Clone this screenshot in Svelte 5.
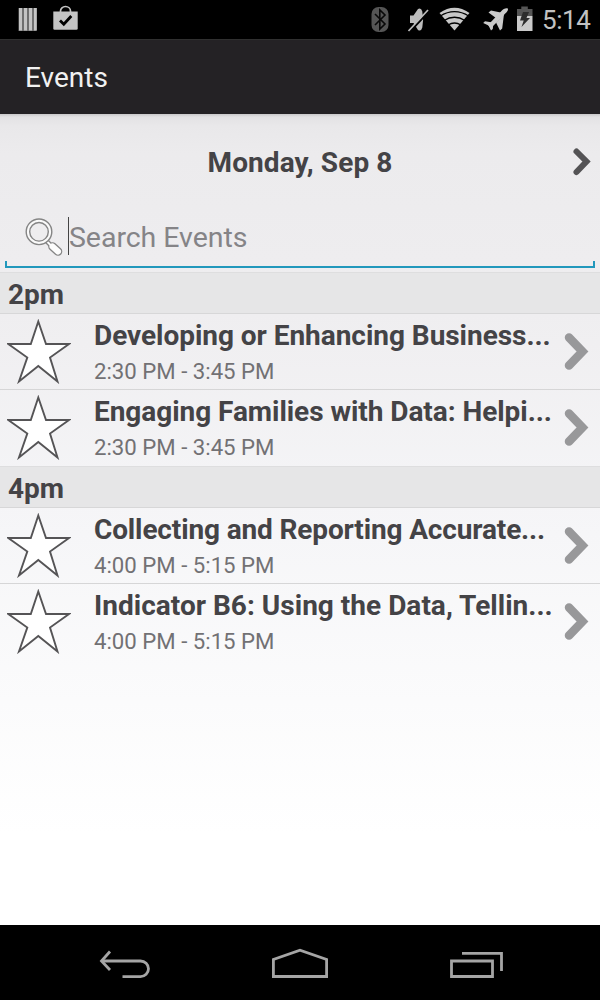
<script>
  const groups = [
    {
      hour: '2pm',
      events: [
        { title: 'Developing or Enhancing Business...', time: '2:30 PM - 3:45 PM', tracking: -0.04 },
        { title: 'Engaging Families with Data: Helpi...', time: '2:30 PM - 3:45 PM', tracking: -0.05 }
      ]
    },
    {
      hour: '4pm',
      events: [
        { title: 'Collecting and Reporting Accurate...', time: '4:00 PM - 5:15 PM', tracking: -0.14 },
        { title: 'Indicator B6: Using the Data, Tellin...', time: '4:00 PM - 5:15 PM', tracking: 0.02 }
      ]
    }
  ];
</script>

<div class="screen">
  <div class="status">
    <svg class="notes" width="80" height="39" viewBox="0 0 80 39">
      <path d="M18.500 8h18v23h-18z" fill="#6f6f6f" />
      <path d="M19 8h3v22.500h-3zM24 8h3v22.500h-3zM29 8h3v22.500h-3zM34 8h2.800v22.500h-2.800z" fill="#c4c4c4" />
      <path d="M60.500 12v-1a5 4.500 0 0 1 10 0v1" fill="none" stroke="#c4c4c4" stroke-width="1.700" />
      <path d="M53.300 11.500h24.400v17a1.300 1.300 0 0 1-1.300 1.300H54.600a1.300 1.300 0 0 1-1.300-1.300z" fill="#c4c4c4" />
      <path d="M60 20.500l3.800 3.800 7.500-8.300" fill="none" stroke="#000" stroke-width="2.800" />
    </svg>
    <svg class="system" width="180" height="39" viewBox="360 0 180 39">
      <rect x="371.500" y="7" width="17" height="25" rx="7" fill="#555" />
      <path d="M375 14l10 10-5.200 5V10l5.200 5-10 10" fill="none" stroke="#080808" stroke-width="1.600" />
      <path d="M410 15.500h3.500L418 9q3-2 4.300 2.500 1.500 8 0 16-1.300 4.500-4.300 2.500l-4.500-7H410z" fill="#bdbdbd" />
      <path d="M409.500 32l20-21.500" stroke="#000" stroke-width="2.500" />
      <path d="M408.500 31l19.500-21" stroke="#bdbdbd" stroke-width="1.700" />
      <path d="M454.500 30.500L439.500 13Q454.500 2.500 469.500 13z" fill="#c8c8c8" />
      <path d="M440 16.200q14.500-9 29 0M444 20.500q10.500-6.500 21 0M448 25q6.500-4 13 0" fill="none" stroke="#000" stroke-width="1.300" />
      <g fill="#cacaca">
        <path d="M507.800 8.600c-2-.8-4.600.6-6.800 2.800L488 25l3 3 12.500-12.500c3-3 5.200-5 4.300-6.900z" />
        <path d="M503 13l-12-2.500-2.500 2 9.500 7zM504 14l-4.500 5-1.500 1.500-2 2 4 8 2.200-2z" />
        <path d="M492.500 22.500l-7.500-1.200-1.800 1.600 5.300 2.600 2.500 5 1.800-1.500.5-5z" />
      </g>
      <path d="M517 9h4.300V6.500h6.500V9h4.700v7H517z" fill="#555" />
      <path d="M517 16h15.500v15H517z" fill="#cacaca" />
      <path d="M523 12h6l-2.500 6h3.500l-8.500 9 2.200-6.500h-3.700z" fill="#2c2c2c" />
    </svg>
    <span class="clock">5:14</span>
  </div>

  <header>Events</header>

  <main>
    <div class="date">
      <span>Monday, Sep 8</span>
      <svg class="next" width="22" height="32" viewBox="0 0 22 32">
        <path d="M4.500 5.500L14.500 15.500 4.500 26" fill="none" stroke="#545355" stroke-width="6" stroke-linecap="round" />
      </svg>
    </div>

    <div class="search">
      <svg width="40" height="40" viewBox="0 0 40 40" fill="none">
        <path d="M21.500 23l5 5" stroke="#858585" stroke-width="4.600" />
        <path d="M27.500 28.500l5.500 5" stroke="#858585" stroke-width="8.600" stroke-linecap="round" />
        <path d="M27.500 28.500l5.500 5" stroke="#fdfdfd" stroke-width="6" stroke-linecap="round" />
        <path d="M21.500 23l5 5" stroke="#fdfdfd" stroke-width="2" />
        <circle cx="14" cy="13.800" r="11.300" stroke="#fafafa" stroke-width="3" />
        <circle cx="14" cy="13.800" r="12.800" stroke="#858585" stroke-width="1.400" />
        <circle cx="14" cy="13.800" r="9.300" fill="#eeedef" stroke="#858585" stroke-width="1.400" />
      </svg>
      <i class="caret"></i>
      <span>Search Events</span>
    </div>
    <div class="underline"></div>

    {#each groups as group}
      <section>
        <h2>{group.hour}</h2>
        {#each group.events as event}
          <article>
            <svg class="star" width="64" height="66" viewBox="0 0 64 66">
              <path d="M31.300 2.500L39 25H62L43 38.500 50.500 62.500 31.300 47 12 62.500 20.300 38.500 1.300 25H23.800z" fill="#fff" stroke="#555456" stroke-width="1.900" />
            </svg>
            <div class="info">
              <h3 style="letter-spacing: {event.tracking}px">{event.title}</h3>
              <p>{event.time}</p>
            </div>
            <svg class="open" width="28" height="44" viewBox="0 0 28 44">
              <path d="M5 7.500L18.500 21.500 5 35.500" fill="none" stroke="#98989a" stroke-width="8.500" stroke-linecap="round" />
            </svg>
          </article>
        {/each}
      </section>
    {/each}
  </main>

  <nav>
    <svg width="600" height="75" viewBox="0 925 600 75" fill="none" stroke="#a5a5a5" stroke-width="2.800">
      <path d="M103 961h37.500a8 7.800 0 0 1 0 15.600H122.500" />
      <path d="M110 951.500l-8.500 9.500 8.500 9" />
      <path d="M273.400 976.500v-17l26.600-9.300 26.600 9.300v17z" />
      <path d="M451.500 961h41v15.500h-41z" />
      <path d="M462 953.300h39.500V971" />
    </svg>
  </nav>
</div>

<style>
  :global(body) { margin: 0; background: #000; }
  .screen {
    width: 600px;
    height: 1000px;
    display: flex;
    flex-direction: column;
    overflow: hidden;
    font-family: Roboto, sans-serif;
    color: #444346;
  }
  svg { display: block; flex: none; }
  .status {
    height: 39px;
    flex: none;
    background: #000;
    display: flex;
    align-items: center;
  }
  .system { margin-left: 280px; }
  .clock {
    margin-left: 2px;
    font-size: 26px;
    line-height: 41px;
    padding-top: 2px;
    letter-spacing: -0.4px;
    color: #c2c2c2;
    white-space: nowrap;
  }
  header {
    height: 75px;
    flex: none;
    box-sizing: border-box;
    padding-left: 25px;
    background: #242225;
    border-top: 1px solid #303030;
    color: #f1f1f1;
    font-size: 28px;
    line-height: 76px;
  }
  main {
    height: 811px;
    flex: none;
    background: linear-gradient(#c9c8ca 0, #e3e2e4 3px, #e9e8ea 12px, #ecebed 40px, #efeef0 200px, #f6f6f8 420px, #fff 720px);
  }
  .date {
    height: 96px;
    display: grid;
    grid-template-columns: 32px 1fr 32px;
    align-items: center;
    text-align: center;
    font-size: 28px;
    font-weight: 700;
    letter-spacing: 0.1px;
  }
  .date span { grid-column: 2; }
  .next { margin-left: 4px; }
  .search {
    height: 51px;
    display: flex;
    align-items: center;
    padding-left: 25px;
    color: #858487;
    font-size: 28.500px;
    letter-spacing: -0.05px;
  }
  .search svg { margin-top: 4px; }
  .search span { padding-top: 4px; line-height: 36px; }
  .caret { width: 1px; height: 38px; margin: 0 0 0 3px; background: #444; }
  .underline {
    height: 7px;
    box-sizing: border-box;
    margin: 0 5px 4px;
    border: solid #2298bc;
    border-width: 0 2px 2px;
  }
  h2 {
    height: 42px;
    box-sizing: border-box;
    margin: 0;
    padding-left: 8px;
    border-top: 1px solid #dededf;
    border-bottom: 1px solid #d7d7d8;
    background: #e6e6e7;
    font-size: 28px;
    line-height: 43px;
  }
  article {
    height: 76px;
    box-sizing: border-box;
    display: flex;
    align-items: flex-start;
    padding: 5px 8px 0 7px;
    border-bottom: 1px solid #d6d6d7;
  }
  article:last-child { border-bottom-color: transparent; }
  .info { flex: 1; margin-left: 23px; min-width: 0; }
  h3 {
    margin: 0;
    font-size: 28px;
    line-height: 33px;
    white-space: nowrap;
  }
  p {
    margin: 6px 0 0;
    font-size: 22.200px;
    line-height: 27px;
    color: #727174;
  }
  .open { margin-top: 11px; }
  nav { height: 75px; flex: none; background: #000; }
</style>
